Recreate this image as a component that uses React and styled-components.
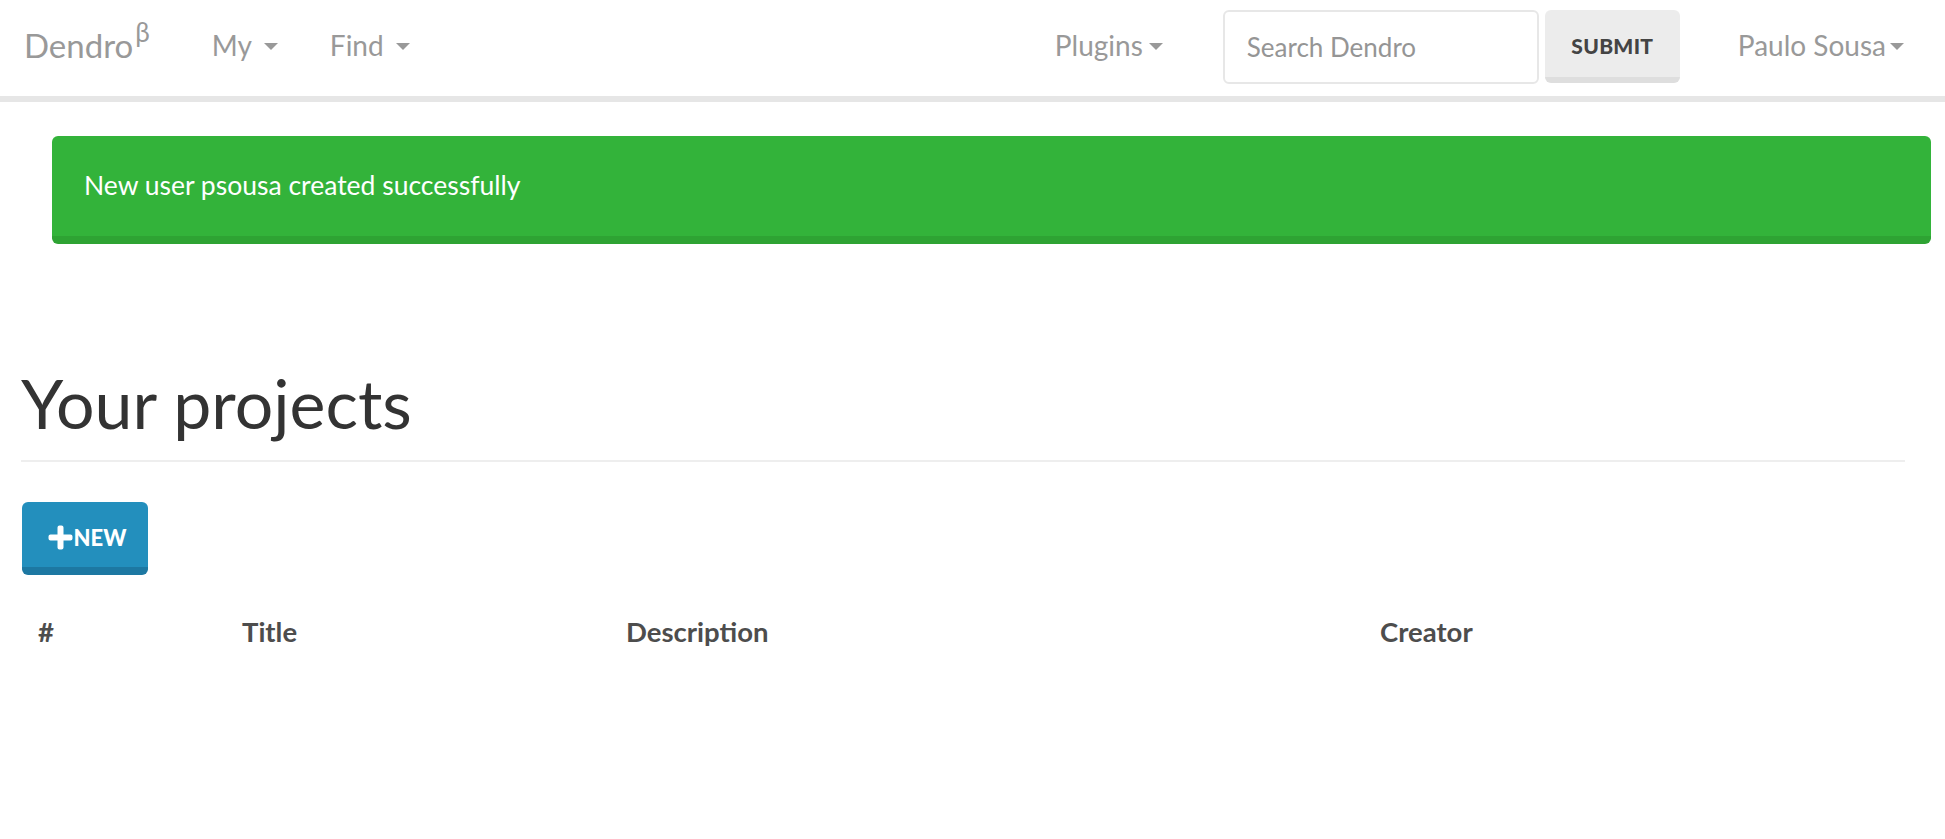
import styled, { createGlobalStyle } from 'styled-components'

const GlobalStyle = createGlobalStyle`
  body {
    margin: 0;
    background: #fff;
    font-family: Lato, 'Open Sans', sans-serif;
  }
`

const Navbar = styled.nav`
  height: 102px;
  box-sizing: border-box;
  border-bottom: 6px solid #e6e6e6;
  display: flex;
  align-items: center;
  padding: 0 41px 2px 24px;
`

const Brand = styled.a`
  font-size: 33px;
  color: #999;
  margin-right: 62px;
  padding-bottom: 4px;
  display: flex;
  align-items: flex-start;
  sup {
    font-size: 26px;
    line-height: 1;
    margin-left: 2px;
    margin-top: -6px;
  }
`

const NavItem = styled.a`
  font-size: 28px;
  color: #999;
  display: flex;
  align-items: center;
  padding-bottom: 5px;
  gap: ${p => p.gap || 12}px;
  margin-right: ${p => p.mr || 0}px;
`

const Caret = styled.span`
  width: 0;
  height: 0;
  border-left: 7px solid transparent;
  border-right: 7px solid transparent;
  border-top: 7px solid #999;
  margin-top: 3px;
`

const Spacer = styled.div`
  flex: 1;
`

const SearchForm = styled.form`
  display: flex;
  gap: 6px;
  margin: 0 58px 0 60px;
`

const SearchInput = styled.input`
  width: 316px;
  height: 74px;
  box-sizing: border-box;
  border: 2px solid #e7e7e7;
  border-radius: 6px;
  padding: 0 22px;
  font-family: Lato, sans-serif;
  font-size: 26px;
  color: #555;
  outline: none;
  &::placeholder {
    color: #959595;
  }
`

const SubmitButton = styled.button`
  width: 135px;
  height: 73px;
  box-sizing: border-box;
  border: none;
  border-bottom: 6px solid #dedede;
  border-radius: 6px;
  background: #ececec;
  color: #444;
  font-family: Lato, sans-serif;
  font-weight: 900;
  font-size: 21px;
  letter-spacing: 0.3px;
  padding-top: 4px;
`

const Page = styled.main`
  padding: 0 40px 0 22px;
`

const Alert = styled.div`
  margin: 34px -26px 0 30px;
  height: 108px;
  box-sizing: border-box;
  background: #33b33a;
  border-bottom: 8px solid #2ea333;
  border-radius: 6px;
  color: #fff;
  font-size: 26.5px;
  display: flex;
  align-items: center;
  padding: 0 32px 2px;
`

const Heading = styled.h1`
  margin: 118px 0 0 -1px;
  font-size: 68px;
  font-weight: 400;
  color: #333;
  line-height: 1.2;
  padding-bottom: 16px;
  border-bottom: 2px solid #eee;
`

const NewButton = styled.button`
  margin-top: 40px;
  width: 126px;
  height: 73px;
  box-sizing: border-box;
  border: none;
  border-bottom: 8px solid #1d78a2;
  border-radius: 6px;
  background: #238fbd;
  color: #fff;
  font-family: Lato, sans-serif;
  font-weight: 900;
  font-size: 22px;
  display: flex;
  align-items: center;
  justify-content: center;
  gap: 1px;
  padding: 6px 0 0 4px;
`

const Table = styled.div`
  display: grid;
  grid-template-columns: 204px 384px 754px 1fr;
  margin-top: 40px;
`

const HeadCell = styled.div`
  font-size: 27.5px;
  font-weight: 700;
  color: #4d4d4d;
  padding: 0 16px;
`

const PlusIcon = () => (
  <svg width="25" height="25" viewBox="0 0 25 25">
    <path d="M9.5 2.5a2 2 0 0 1 2-2h2a2 2 0 0 1 2 2v7h7a2 2 0 0 1 2 2v2a2 2 0 0 1-2 2h-7v7a2 2 0 0 1-2 2h-2a2 2 0 0 1-2-2v-7h-7a2 2 0 0 1-2-2v-2a2 2 0 0 1 2-2h7z" fill="#fff" />
  </svg>
)

export default function App() {
  return (
    <>
      <GlobalStyle />
      <Navbar>
        <Brand>Dendro<sup>β</sup></Brand>
        <NavItem mr={52}>My <Caret /></NavItem>
        <NavItem>Find <Caret /></NavItem>
        <Spacer />
        <NavItem gap={6}>Plugins<Caret /></NavItem>
        <SearchForm onSubmit={e => e.preventDefault()}>
          <SearchInput placeholder="Search Dendro" />
          <SubmitButton>SUBMIT</SubmitButton>
        </SearchForm>
        <NavItem gap={4}>Paulo Sousa<Caret /></NavItem>
      </Navbar>
      <Page>
        <Alert>New user psousa created successfully</Alert>
        <Heading>Your projects</Heading>
        <NewButton><PlusIcon />NEW</NewButton>
        <Table>
          <HeadCell>#</HeadCell>
          <HeadCell>Title</HeadCell>
          <HeadCell>Description</HeadCell>
          <HeadCell>Creator</HeadCell>
        </Table>
      </Page>
    </>
  )
}
